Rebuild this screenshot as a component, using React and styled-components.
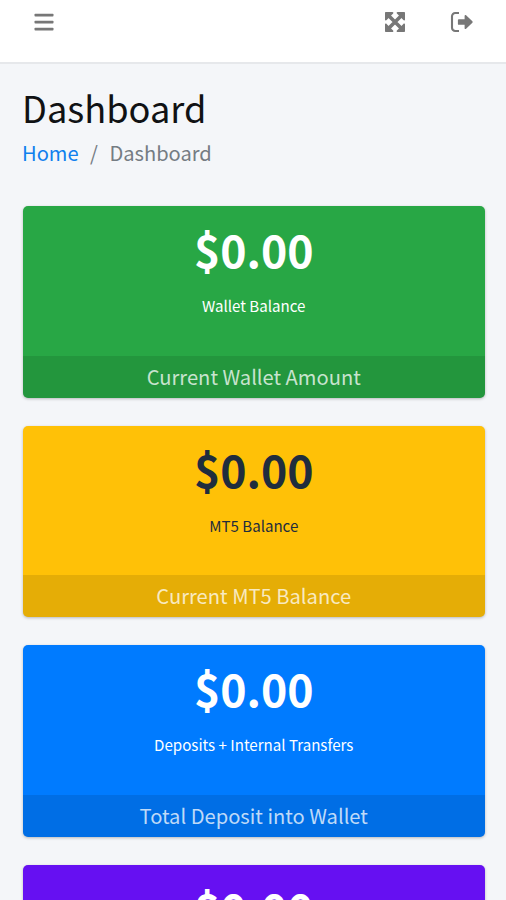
import React from "react";
import styled, { createGlobalStyle } from "styled-components";

const GlobalStyle = createGlobalStyle`
  * { box-sizing: border-box; }
  body {
    margin: 0;
    height: 900px;
    overflow: hidden;
    background: #f4f6f9;
    font-family: "Noto Sans CJK SC", "Noto Sans", sans-serif;
  }
`;

const Page = styled.div`
  height: 900px;
  overflow: hidden;
`;

const TopBar = styled.header`
  display: flex;
  align-items: flex-start;
  height: 64px;
  padding: 11px 32px 0 32px;
  background: #fff;
  border-bottom: 2px solid #e6e8eb;
  color: #777;
`;

const IconButton = styled.button`
  display: flex;
  width: 24px;
  height: 22px;
  padding: 0;
  border: 0;
  background: none;
  color: inherit;
  align-items: center;
  justify-content: center;
  margin-left: ${(p) => p.$gap || "0"};
`;

const PageHead = styled.section`
  height: 142px;
  padding: 21px 22px 0 22px;
`;

const Heading = styled.h1`
  margin: 0;
  font-size: 36.2px;
  font-weight: 400;
  line-height: 44px;
  color: #101214;
`;

const Breadcrumb = styled.nav`
  display: flex;
  margin-top: 9px;
  font-size: 20.1px;
  line-height: 30px;
  color: #757c83;
`;

const HomeLink = styled.a`
  color: #0f80ee;
  text-decoration: none;
`;

const Separator = styled.span`
  margin: 0 11.5px;
`;

const Cards = styled.main`
  display: grid;
  gap: 28px;
  padding: 0 21px 0 22.5px;
`;

const Card = styled.article`
  height: 191.7px;
  display: flex;
  flex-direction: column;
  align-items: center;
  overflow: hidden;
  border-radius: 5px;
  background: ${(p) => p.$bg};
  color: ${(p) => p.$fg};
  box-shadow: 0 1px 3px rgba(0, 0, 0, 0.25);
  white-space: nowrap;
`;

const Amount = styled.h3`
  margin: 15px 0 0;
  font-size: 44.6px;
  line-height: 56px;
  font-weight: 700;
`;

const Caption = styled.p`
  margin: 16px 0 0;
  font-size: 15.1px;
  line-height: 24px;
`;

const CardFooter = styled.footer`
  width: 100%;
  height: 42px;
  margin-top: auto;
  text-align: center;
  font-size: 20.15px;
  line-height: 41px;
  background: rgba(0, 0, 0, 0.1);
  color: rgba(255, 255, 255, 0.75);
`;

const cards = [
  { bg: "#28a745", fg: "#fff", caption: "Wallet Balance", footer: "Current Wallet Amount" },
  { bg: "#ffc107", fg: "#1f2d3d", caption: "MT5 Balance", footer: "Current MT5 Balance" },
  { bg: "#007bff", fg: "#fff", caption: "Deposits + Internal Transfers", footer: "Total Deposit into Wallet" },
  { bg: "#6610f2", fg: "#fff" },
];

const MenuIcon = () => (
  <svg width="20" height="20" viewBox="0 0 20 20" fill="currentColor">
    <rect x="0.5" y="1.8" width="19" height="2.8" rx="0.8" />
    <rect x="0.5" y="8.8" width="19" height="2.8" rx="0.8" />
    <rect x="0.5" y="15.8" width="19" height="2.8" rx="0.8" />
  </svg>
);

const ExpandIcon = () => (
  <svg width="20" height="20" viewBox="0 0 20 20" fill="currentColor">
    <path d="M4 4l12 12M16 4L4 16" fill="none" stroke="currentColor" strokeWidth="3.6" />
    <path d="M1 0h6.4c.9 0 1.3 1 .7 1.6L1.6 8.1C1 8.7 0 8.3 0 7.4V1c0-.6.4-1 1-1z" />
    <path d="M19 0h-6.4c-.9 0-1.3 1-.7 1.6l6.5 6.5c.6.6 1.6.2 1.6-.7V1c0-.6-.4-1-1-1z" />
    <path d="M1 20h6.4c.9 0 1.3-1 .7-1.6l-6.5-6.5c-.6-.6-1.6-.2-1.6.7V19c0 .6.4 1 1 1z" />
    <path d="M19 20h-6.4c-.9 0-1.3-1-.7-1.6l6.5-6.5c.6-.6 1.6-.2 1.6.7V19c0 .6-.4 1-1 1z" />
  </svg>
);

const SignOutIcon = () => (
  <svg width="24" height="22" viewBox="0 0 24 22" fill="currentColor">
    <path d="M9 2H5.2A3.2 3.2 0 0 0 2 5.2v11.6A3.2 3.2 0 0 0 5.2 20H9" fill="none" stroke="currentColor" strokeWidth="2.1" />
    <path d="M8.8 8.2h5.8V4.8c0-.8.9-1.2 1.5-.6l6.3 6.1c.4.4.4 1 0 1.4l-6.3 6.1c-.6.6-1.5.2-1.5-.6v-3.4H8.8c-.5 0-.9-.4-.9-.9V9.1c0-.5.4-.9.9-.9z" />
  </svg>
);

export default function App() {
  return (
    <Page>
      <GlobalStyle />
      <TopBar>
        <IconButton aria-label="Menu"><MenuIcon /></IconButton>
        <IconButton aria-label="Fullscreen" $gap="auto"><ExpandIcon /></IconButton>
        <IconButton aria-label="Sign out" $gap="43px"><SignOutIcon /></IconButton>
      </TopBar>
      <PageHead>
        <Heading>Dashboard</Heading>
        <Breadcrumb>
          <HomeLink>Home</HomeLink>
          <Separator>/</Separator>
          <span>Dashboard</span>
        </Breadcrumb>
      </PageHead>
      <Cards>
        {cards.map((c) => (
          <Card key={c.bg} $bg={c.bg} $fg={c.fg}>
            <Amount>$0.00</Amount>
            {c.caption && <Caption>{c.caption}</Caption>}
            {c.footer && <CardFooter>{c.footer}</CardFooter>}
          </Card>
        ))}
      </Cards>
    </Page>
  );
}
